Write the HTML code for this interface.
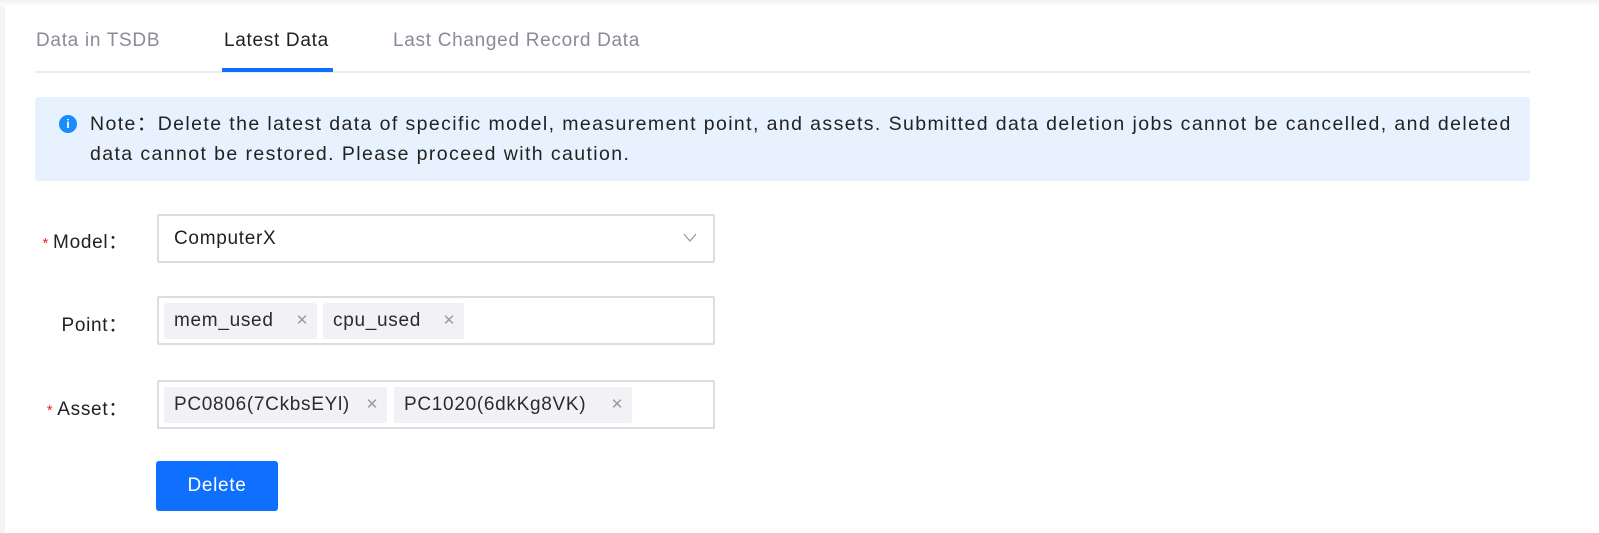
<!DOCTYPE html>
<html><head><style>
*{box-sizing:border-box;margin:0;padding:0}
body{width:1599px;height:533px;background:#fff;font-family:"Liberation Sans",sans-serif;position:relative;overflow:hidden;color:#1f1f26;letter-spacing:0.7px}
.edge{position:absolute;left:0;top:0;width:5px;height:533px;background:#f4f4f5}
.topsh{position:absolute;left:0;top:0;width:1599px;height:6px;background:linear-gradient(#f0f0f2,#fff)}
.tab{position:absolute;top:30px;font-size:19px;color:#8a8a99}
.line{position:absolute;left:35px;top:71px;width:1495px;height:2px;background:#ebebef}
.ul{position:absolute;left:222px;top:68px;width:111px;height:4px;background:#0f6fff}
.alert{position:absolute;left:35px;top:97px;width:1495px;height:84px;background:#e8f2fe;border-radius:3px}
.alert .t{position:absolute;left:55px;top:12px;font-size:19.5px;line-height:30px;width:1440px;color:#222;letter-spacing:1.4px;white-space:nowrap}
.ic{position:absolute;left:24px;top:18px;width:18px;height:18px;border-radius:50%;background:#1a8cff;color:#fff;font-size:12px;font-weight:bold;text-align:center;line-height:18px;letter-spacing:0}
.lab{position:absolute;font-size:19px;right:1471px;text-align:right;white-space:nowrap}
.lab b{color:#f5222d;font-weight:normal;font-size:15px;margin-right:4px}
.box{position:absolute;left:157px;width:558px;height:49px;border:2px solid #dcdce2;border-radius:2px}
.tag{position:absolute;top:5px;height:36px;background:#f2f2f6;border-radius:2px;font-size:19px;line-height:36px;padding-left:10px;color:#2a2a33}
.tag i{font-style:normal;color:#9a9aa6;font-size:15px;position:absolute;right:8px;top:0}
.btn{position:absolute;left:156px;top:461px;width:122px;height:50px;background:#0f6fff;border-radius:3px;color:#fff;font-size:19px;text-align:center;line-height:50px}
</style></head><body>
<div class="edge"></div><div class="topsh"></div>
<div class="tab" style="left:36px">Data in TSDB</div>
<div class="tab" style="left:224px;color:#1f1f26">Latest Data</div>
<div class="tab" style="left:393px">Last Changed Record Data</div>
<div class="line"></div><div class="ul"></div>
<div class="alert"><div class="ic">i</div><div class="t">Note：Delete the latest data of specific model, measurement point, and assets. Submitted data deletion jobs cannot be cancelled, and deleted<br>data cannot be restored. Please proceed with caution.</div></div>

<div class="lab" style="top:227px"><b>*</b>Model：</div>
<div class="box" style="top:214px"><span style="position:absolute;left:15px;top:12px;font-size:19px">ComputerX</span>
<svg style="position:absolute;right:16px;top:17px" width="14" height="10"><path d="M1 1L7 8L13 1" fill="none" stroke="#9a9aa6" stroke-width="1.3"/></svg></div>

<div class="lab" style="top:310px">Point：</div>
<div class="box" style="top:296px">
<div class="tag" style="left:5px;width:153px">mem_used<i>✕</i></div>
<div class="tag" style="left:164px;width:141px">cpu_used<i>✕</i></div></div>

<div class="lab" style="top:394px"><b>*</b>Asset：</div>
<div class="box" style="top:380px">
<div class="tag" style="left:5px;width:223px">PC0806(7CkbsEYl)<i>✕</i></div>
<div class="tag" style="left:235px;width:238px">PC1020(6dkKg8VK)<i>✕</i></div></div>

<div class="btn">Delete</div>
</body></html>
